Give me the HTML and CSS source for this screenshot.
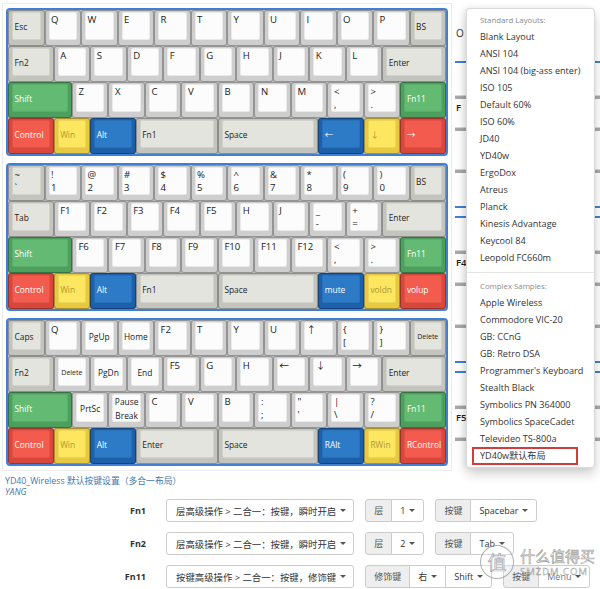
FILE: index.html
```html
<!DOCTYPE html>
<html lang="zh">
<head>
<meta charset="utf-8">
<title>YD40 Wireless</title>
<link rel="stylesheet" href="styles.css">
</head>
<body>
<div class="page">
  <div class="top">
    <div class="board">
      <!-- keyboard 1 -->
      <div class="kb">
        <div class="row">
          <div class="k u1 m c"><div class="f">Esc</div></div>
          <div class="k u1 a"><div class="f">Q</div></div>
          <div class="k u1 a"><div class="f">W</div></div>
          <div class="k u1 a"><div class="f">E</div></div>
          <div class="k u1 a"><div class="f">R</div></div>
          <div class="k u1 a"><div class="f">T</div></div>
          <div class="k u1 a"><div class="f">Y</div></div>
          <div class="k u1 a"><div class="f">U</div></div>
          <div class="k u1 a"><div class="f">I</div></div>
          <div class="k u1 a"><div class="f">O</div></div>
          <div class="k u1 a"><div class="f">P</div></div>
          <div class="k u1 m c"><div class="f">BS</div></div>
        </div>
        <div class="row">
          <div class="k u125 m c"><div class="f">Fn2</div></div>
          <div class="k u1 a"><div class="f">A</div></div>
          <div class="k u1 a"><div class="f">S</div></div>
          <div class="k u1 a"><div class="f">D</div></div>
          <div class="k u1 a"><div class="f">F</div></div>
          <div class="k u1 a"><div class="f">G</div></div>
          <div class="k u1 a"><div class="f">H</div></div>
          <div class="k u1 a"><div class="f">J</div></div>
          <div class="k u1 a"><div class="f">K</div></div>
          <div class="k u1 a"><div class="f">L</div></div>
          <div class="k u175 m c"><div class="f">Enter</div></div>
        </div>
        <div class="row">
          <div class="k u175 g c"><div class="f">Shift</div></div>
          <div class="k u1 a"><div class="f">Z</div></div>
          <div class="k u1 a"><div class="f">X</div></div>
          <div class="k u1 a"><div class="f">C</div></div>
          <div class="k u1 a"><div class="f">V</div></div>
          <div class="k u1 a"><div class="f">B</div></div>
          <div class="k u1 a"><div class="f">N</div></div>
          <div class="k u1 a"><div class="f">M</div></div>
          <div class="k u1 a d"><div class="f"><span>&lt;</span><span>,</span></div></div>
          <div class="k u1 a d"><div class="f"><span>&gt;</span><span>.</span></div></div>
          <div class="k u125 g c"><div class="f">Fn11</div></div>
        </div>
        <div class="row">
          <div class="k u125 r c"><div class="f">Control</div></div>
          <div class="k u1 y c"><div class="f">Win</div></div>
          <div class="k u125 b c"><div class="f">Alt</div></div>
          <div class="k u225 m c"><div class="f">Fn1</div></div>
          <div class="k u275 m c"><div class="f">Space</div></div>
          <div class="k u125 b c"><div class="f">←</div></div>
          <div class="k u1 y c"><div class="f">↓</div></div>
          <div class="k u125 r c"><div class="f">→</div></div>
        </div>
      </div>

      <!-- keyboard 2 -->
      <div class="kb">
        <div class="row">
          <div class="k u1 m d"><div class="f"><span>~</span><span>`</span></div></div>
          <div class="k u1 a d"><div class="f"><span>!</span><span>1</span></div></div>
          <div class="k u1 a d"><div class="f"><span>@</span><span>2</span></div></div>
          <div class="k u1 a d"><div class="f"><span>#</span><span>3</span></div></div>
          <div class="k u1 a d"><div class="f"><span>$</span><span>4</span></div></div>
          <div class="k u1 a d"><div class="f"><span>%</span><span>5</span></div></div>
          <div class="k u1 a d"><div class="f"><span>^</span><span>6</span></div></div>
          <div class="k u1 a d"><div class="f"><span>&amp;</span><span>7</span></div></div>
          <div class="k u1 a d"><div class="f"><span>*</span><span>8</span></div></div>
          <div class="k u1 a d"><div class="f"><span>(</span><span>9</span></div></div>
          <div class="k u1 a d"><div class="f"><span>)</span><span>0</span></div></div>
          <div class="k u1 m c"><div class="f">BS</div></div>
        </div>
        <div class="row">
          <div class="k u125 m c"><div class="f">Tab</div></div>
          <div class="k u1 a"><div class="f">F1</div></div>
          <div class="k u1 a"><div class="f">F2</div></div>
          <div class="k u1 a"><div class="f">F3</div></div>
          <div class="k u1 a"><div class="f">F4</div></div>
          <div class="k u1 a"><div class="f">F5</div></div>
          <div class="k u1 a"><div class="f">H</div></div>
          <div class="k u1 a"><div class="f">J</div></div>
          <div class="k u1 a d"><div class="f"><span>_</span><span>-</span></div></div>
          <div class="k u1 a d"><div class="f"><span>+</span><span>=</span></div></div>
          <div class="k u175 m c"><div class="f">Enter</div></div>
        </div>
        <div class="row">
          <div class="k u175 g c"><div class="f">Shift</div></div>
          <div class="k u1 a"><div class="f">F6</div></div>
          <div class="k u1 a"><div class="f">F7</div></div>
          <div class="k u1 a"><div class="f">F8</div></div>
          <div class="k u1 a"><div class="f">F9</div></div>
          <div class="k u1 a"><div class="f">F10</div></div>
          <div class="k u1 a"><div class="f">F11</div></div>
          <div class="k u1 a"><div class="f">F12</div></div>
          <div class="k u1 a d"><div class="f"><span>&lt;</span><span>,</span></div></div>
          <div class="k u1 a d"><div class="f"><span>&gt;</span><span>.</span></div></div>
          <div class="k u125 g c"><div class="f">Fn11</div></div>
        </div>
        <div class="row">
          <div class="k u125 r c"><div class="f">Control</div></div>
          <div class="k u1 y c"><div class="f">Win</div></div>
          <div class="k u125 b c"><div class="f">Alt</div></div>
          <div class="k u225 m c"><div class="f">Fn1</div></div>
          <div class="k u275 m c"><div class="f">Space</div></div>
          <div class="k u125 b c"><div class="f">mute</div></div>
          <div class="k u1 y c"><div class="f">voldn</div></div>
          <div class="k u125 r c"><div class="f">volup</div></div>
        </div>
      </div>

      <!-- keyboard 3 -->
      <div class="kb">
        <div class="row">
          <div class="k u1 m c"><div class="f">Caps</div></div>
          <div class="k u1 a"><div class="f">Q</div></div>
          <div class="k u1 a cc"><div class="f">PgUp</div></div>
          <div class="k u1 a cc"><div class="f">Home</div></div>
          <div class="k u1 a"><div class="f">F2</div></div>
          <div class="k u1 a"><div class="f">T</div></div>
          <div class="k u1 a"><div class="f">Y</div></div>
          <div class="k u1 a"><div class="f">U</div></div>
          <div class="k u1 a"><div class="f">↑</div></div>
          <div class="k u1 a d"><div class="f"><span>{</span><span>[</span></div></div>
          <div class="k u1 a d"><div class="f"><span>}</span><span>]</span></div></div>
          <div class="k u1 m cc sm"><div class="f">Delete</div></div>
        </div>
        <div class="row">
          <div class="k u125 m c"><div class="f">Fn2</div></div>
          <div class="k u1 a cc sm"><div class="f">Delete</div></div>
          <div class="k u1 a cc"><div class="f">PgDn</div></div>
          <div class="k u1 a cc"><div class="f">End</div></div>
          <div class="k u1 a"><div class="f">F5</div></div>
          <div class="k u1 a"><div class="f">G</div></div>
          <div class="k u1 a"><div class="f">H</div></div>
          <div class="k u1 a"><div class="f">←</div></div>
          <div class="k u1 a"><div class="f">↓</div></div>
          <div class="k u1 a"><div class="f">→</div></div>
          <div class="k u175 m c"><div class="f">Enter</div></div>
        </div>
        <div class="row">
          <div class="k u175 g c"><div class="f">Shift</div></div>
          <div class="k u1 a cc"><div class="f">PrtSc</div></div>
          <div class="k u1 a d mid"><div class="f"><span>Pause</span><span>Break</span></div></div>
          <div class="k u1 a"><div class="f">C</div></div>
          <div class="k u1 a"><div class="f">V</div></div>
          <div class="k u1 a"><div class="f">B</div></div>
          <div class="k u1 a d"><div class="f"><span>:</span><span>;</span></div></div>
          <div class="k u1 a d"><div class="f"><span>"</span><span>'</span></div></div>
          <div class="k u1 a d"><div class="f"><span>|</span><span>\</span></div></div>
          <div class="k u1 a d"><div class="f"><span>?</span><span>/</span></div></div>
          <div class="k u125 g c"><div class="f">Fn11</div></div>
        </div>
        <div class="row">
          <div class="k u125 r c"><div class="f">Control</div></div>
          <div class="k u1 y c"><div class="f">Win</div></div>
          <div class="k u125 b c"><div class="f">Alt</div></div>
          <div class="k u225 m c"><div class="f">Enter</div></div>
          <div class="k u275 m c"><div class="f">Space</div></div>
          <div class="k u125 b c"><div class="f">RAlt</div></div>
          <div class="k u1 y c"><div class="f">RWin</div></div>
          <div class="k u125 r c"><div class="f">RControl</div></div>
        </div>
      </div>
    </div>

    <div class="side">
      <div class="thumb first">
        <div class="glyph">O</div>
        <div class="bl b1"></div>
        <div class="gb g2"></div>
        <div class="ft">F</div>
        <div class="gb g3"></div>
      </div>
      <div class="thumb">
        <div class="gb"></div>
        <div class="bl b0"></div>
        <div class="bl b1"></div>
        <div class="gb g2"></div>
        <div class="ft">F4</div>
        <div class="gb g3"></div>
      </div>
      <div class="thumb">
        <div class="gb"></div>
        <div class="bl b0"></div>
        <div class="bl b1"></div>
        <div class="gb g2"></div>
        <div class="ft">F5</div>
        <div class="gb g3"></div>
      </div>
    </div>

    <ul class="menu">
      <li class="hd">Standard Layouts:</li>
      <li>Blank Layout</li>
      <li>ANSI 104</li>
      <li>ANSI 104 (big-ass enter)</li>
      <li>ISO 105</li>
      <li>Default 60%</li>
      <li>ISO 60%</li>
      <li>JD40</li>
      <li>YD40w</li>
      <li>ErgoDox</li>
      <li>Atreus</li>
      <li>Planck</li>
      <li>Kinesis Advantage</li>
      <li>Keycool 84</li>
      <li>Leopold FC660m</li>
      <li class="dv"></li>
      <li class="hd">Complex Samples:</li>
      <li>Apple Wireless</li>
      <li>Commodore VIC-20</li>
      <li>GB: CCnG</li>
      <li>GB: Retro DSA</li>
      <li>Programmer's Keyboard</li>
      <li>Stealth Black</li>
      <li>Symbolics PN 364000</li>
      <li>Symbolics SpaceCadet</li>
      <li>Televideo TS-800a</li>
      <li class="sel">YD40w默认布局</li>
    </ul>
  </div>

  <div class="info">
    <div class="title">YD40_Wireless 默认按键设置（多合一布局）</div>
    <div class="author">YANG</div>
  </div>

  <div class="form">
    <div class="lbl">Fn1</div>
    <div class="ctrls">
      <div class="grp"><div class="btn long">层高级操作 &gt; 二合一：按键，瞬时开启<i class="caret"></i></div></div>
      <div class="grp"><div class="btn add">层</div><div class="btn">1<i class="caret"></i></div></div>
      <div class="grp"><div class="btn add">按键</div><div class="btn">Spacebar<i class="caret"></i></div></div>
    </div>
    <div class="lbl">Fn2</div>
    <div class="ctrls">
      <div class="grp"><div class="btn long">层高级操作 &gt; 二合一：按键，瞬时开启<i class="caret"></i></div></div>
      <div class="grp"><div class="btn add">层</div><div class="btn">2<i class="caret"></i></div></div>
      <div class="grp"><div class="btn add">按键</div><div class="btn">Tab<i class="caret"></i></div></div>
    </div>
    <div class="lbl">Fn11</div>
    <div class="ctrls">
      <div class="grp"><div class="btn long">按键高级操作 &gt; 二合一：按键，修饰键<i class="caret"></i></div></div>
      <div class="grp"><div class="btn add">修饰键</div><div class="btn">右<i class="caret"></i></div><div class="btn">Shift<i class="caret"></i></div></div>
      <div class="grp"><div class="btn add">按键</div><div class="btn faint">Menu<i class="caret"></i></div></div>
    </div>
  </div>

  <div class="wm">
    <div class="wm-logo">值</div>
    <div class="wm-text">
      <div class="wm-cn">什么值得买</div>
      <div class="wm-en">SMZDM.COM</div>
    </div>
  </div>
</div>
</body>
</html>
```

FILE: styles.css
```css
body {
  margin: 0;
  background: #fff;
  color: #333;
  font-family: "Open Sans", "Noto Sans CJK SC", sans-serif;
}

.page {
  position: relative;
  width: 600px;
  height: 589px;
  overflow: hidden;
}

.top {
  display: flex;
  align-items: flex-start;
}

/* ---------- keyboards ---------- */
.board {
  margin: 3px 0 0 2px;
  padding: 4px 3px;
  border: 1px solid #ececec;
  display: flex;
  flex-direction: column;
  gap: 7px;
  flex-shrink: 0;
}

.kb {
  width: 438px;
  border: 2px solid #3f80d6;
  border-radius: 4px;
  background: #bdbdbd;
}

.row {
  display: flex;
  height: 36px;
}

.k {
  box-sizing: border-box;
  flex-shrink: 0;
  height: 36px;
  border: 1px solid rgba(0, 0, 0, 0.28);
  border-radius: 3px;
  padding: 1px 3px 5px;
}

.u1 { width: 36.5px; }
.u125 { width: 45.625px; }
.u175 { width: 63.875px; }
.u225 { width: 82.125px; }
.u275 { width: 100.375px; }

.f {
  box-sizing: border-box;
  height: 100%;
  border-radius: 2px;
  border: 1px solid rgba(0, 0, 0, 0.07);
  padding: 1px 1.5px;
  display: flex;
  flex-direction: column;
  font-size: 9.6px;
  line-height: 11px;
  white-space: nowrap;
}

.c .f {
  justify-content: center;
  font-size: 8.4px;
}

.d .f {
  justify-content: space-between;
}

.cc .f {
  justify-content: center;
  align-items: center;
  font-size: 8.4px;
}

.mid .f {
  align-items: center;
  font-size: 8.4px;
  padding-bottom: 0;
}

.sm .f {
  font-size: 7px;
}

/* key colours */
.a { background: #cecece; }
.a .f { background: #fcfcfc; color: #222; }

.m { background: #c4c4be; }
.m .f { background: #e4e4de; color: #222; }

.g { background: #4c9f5d; }
.g .f { background: #63bb73; color: #fff; }

.r { background: #d8473b; }
.r .f { background: #f25b4e; color: #fff; }

.y { background: #e6c940; }
.y .f { background: #fde760; color: #ad9833; }

.b { background: #1d60a9; }
.b .f { background: #2d7bc7; color: #fff; }

/* ---------- right column behind the menu ---------- */
.side {
  margin-left: 3px;
  width: 145px;
  flex-shrink: 0;
  display: flex;
  flex-direction: column;
  overflow: hidden;
}

.thumb {
  height: 155px;
  padding-top: 14px;
  box-sizing: border-box;
  overflow: hidden;
}

.thumb.first {
  padding-top: 28px;
}

.glyph {
  font-size: 10px;
  line-height: 11px;
  padding-left: 1px;
  color: #333;
}

.gb {
  height: 3px;
  background: #a9a9a9;
  border-top: 1px solid #d8d8d8;
}

.bl {
  height: 2px;
  background: #3f80d6;
}

.b0 { margin-top: 33px; }
.b1 { margin-top: 8px; }
.first .b1 { margin-top: 22px; }
.g2 { margin-top: 32px; }
.g3 { margin-top: 14px; }

.ft {
  margin-top: 3px;
  padding-left: 1px;
  font-size: 9.5px;
  line-height: 11px;
  font-weight: 600;
  color: #222;
}

/* ---------- dropdown menu ---------- */
.menu {
  position: absolute;
  left: 466px;
  top: 8px;
  width: 129px;
  box-sizing: border-box;
  margin: 0;
  padding: 4px 0 2px;
  list-style: none;
  background: #fff;
  border: 1px solid rgba(0, 0, 0, 0.15);
  border-radius: 4px;
  box-shadow: 0 6px 12px rgba(0, 0, 0, 0.18), -2px 0 6px rgba(0, 0, 0, 0.08);
}

.menu li {
  font-size: 9.1px;
  line-height: 17px;
  padding-left: 13px;
  color: #333;
  white-space: nowrap;
}

.menu .hd {
  font-size: 7.8px;
  line-height: 15px;
  color: #8a8a8a;
}

.menu .dv {
  height: 1px;
  padding: 0;
  margin: 6px 0;
  background: #e5e5e5;
}

.menu .sel {
  margin: 0 16px 0 5px;
  padding-left: 6px;
  border: 2px solid #d23c3c;
  line-height: 14px;
}

/* ---------- info + form ---------- */
.info {
  padding-left: 5px;
  margin-top: 5px;
}

.title,
.author {
  font-size: 8.8px;
  line-height: 11px;
  color: #4677ad;
}

.author {
  font-style: italic;
}

.form {
  display: grid;
  grid-template-columns: 146px max-content;
  column-gap: 20px;
  row-gap: 10px;
  margin-top: 1px;
}

.lbl {
  text-align: right;
  font-weight: 700;
  font-size: 9px;
  line-height: 23px;
  color: #333;
}

.ctrls {
  display: flex;
  gap: 11px;
}

.grp {
  display: flex;
}

.btn {
  box-sizing: border-box;
  height: 23px;
  border: 1px solid #ccc;
  padding: 0 8px;
  display: flex;
  align-items: center;
  font-size: 9px;
  color: #333;
  background: #fff;
  white-space: nowrap;
}

.btn.long {
  font-size: 9.4px;
  padding: 0 7px 0 9px;
}

.btn.faint {
  color: #777;
}

.btn + .btn {
  margin-left: -1px;
}

.grp .btn:first-child { border-radius: 3px 0 0 3px; }
.grp .btn:last-child { border-radius: 0 3px 3px 0; }
.grp .btn:only-child { border-radius: 3px; }

.add {
  background: #eee;
  color: #555;
}

.caret {
  display: inline-block;
  width: 0;
  height: 0;
  margin-left: 4px;
  border-top: 3px solid #555;
  border-left: 3px solid transparent;
  border-right: 3px solid transparent;
}

/* ---------- watermark ---------- */
.wm {
  position: absolute;
  left: 480px;
  top: 545px;
  display: flex;
  align-items: center;
  gap: 6px;
  pointer-events: none;
  white-space: nowrap;
}

.wm-logo {
  width: 32px;
  height: 32px;
  border-radius: 50%;
  border: 1.5px solid rgba(110, 110, 110, 0.55);
  display: flex;
  align-items: center;
  justify-content: center;
  font-size: 19px;
  color: rgba(240, 240, 240, 0.7);
  -webkit-text-stroke: 0.6px rgba(90, 90, 90, 0.6);
  background: rgba(255, 255, 255, 0.25);
}

.wm-cn {
  font-size: 15px;
  line-height: 19px;
  color: rgba(240, 240, 240, 0.75);
  -webkit-text-stroke: 0.6px rgba(90, 90, 90, 0.6);
}

.wm-en {
  font-size: 9.5px;
  line-height: 12px;
  letter-spacing: 1px;
  color: rgba(240, 240, 240, 0.75);
  -webkit-text-stroke: 0.4px rgba(90, 90, 90, 0.6);
}
```
